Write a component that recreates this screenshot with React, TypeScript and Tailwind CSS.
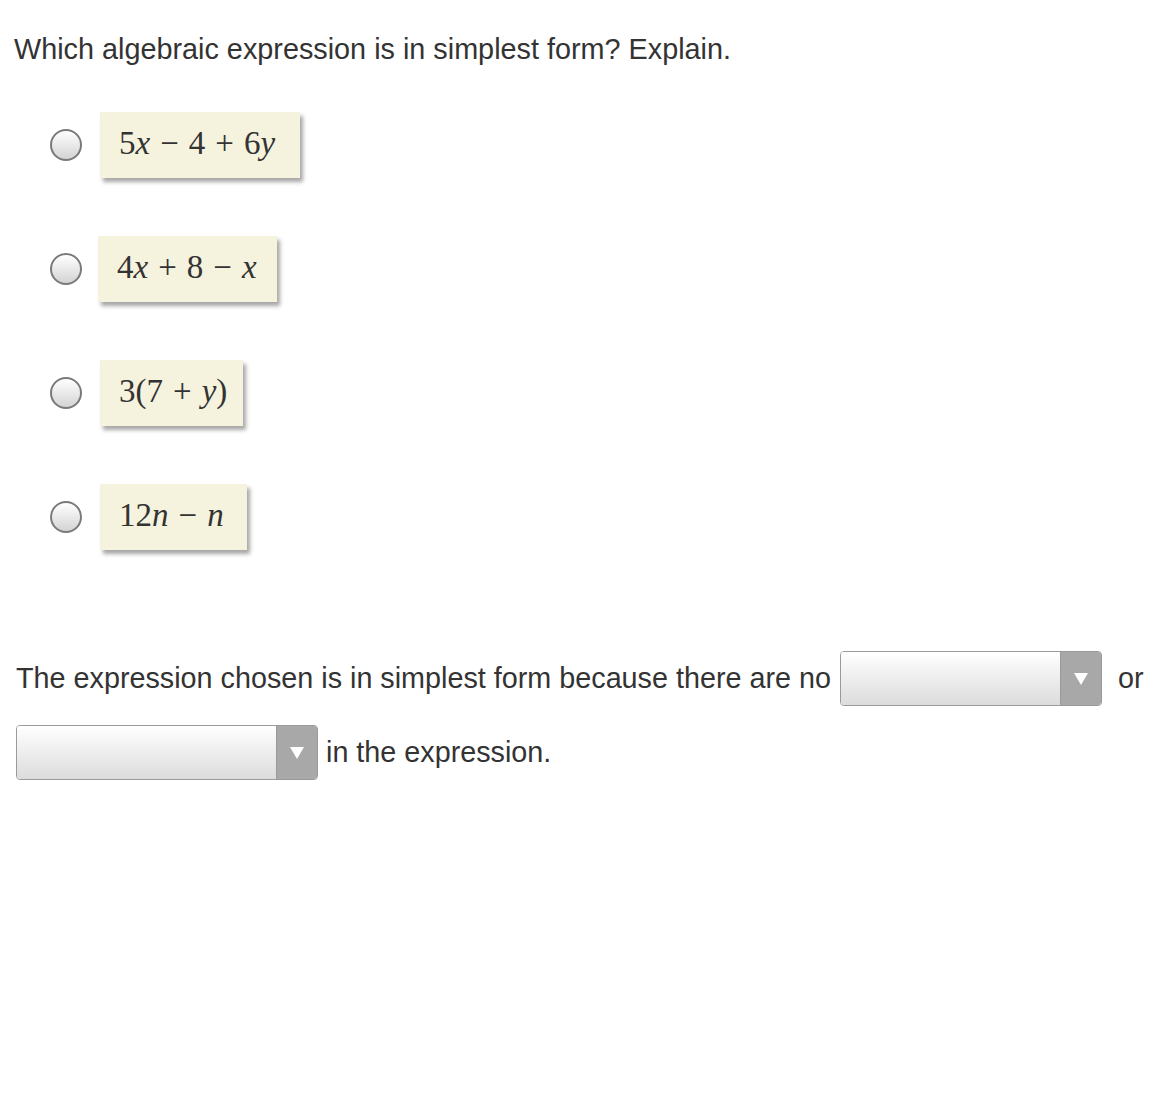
import React from "react";

function Radio() {
  return (
    <div className="w-[32px] h-[32px] rounded-full border-2 border-[#7a7a7a] bg-gradient-to-b from-white to-[#d4d4d4] shrink-0" />
  );
}

function MathBox({ children, w }: { children: React.ReactNode; w: string }) {
  return (
    <div
      className={`h-[66px] ${w} bg-[#f5f2dd] flex items-center pl-[19px] pb-[2px] shadow-[3px_4px_4px_rgba(0,0,0,0.35)] text-[33px] text-[#333] whitespace-nowrap`}
      style={{ fontFamily: '"Liberation Serif", "DejaVu Serif", serif' }}
    >
      {children}
    </div>
  );
}

function Dropdown({ w }: { w: string }) {
  return (
    <div className={`${w} h-[55px] rounded-[4px] border border-[#9a9a9a] flex overflow-hidden shrink-0`}>
      <div className="flex-1 bg-gradient-to-b from-white to-[#dcdcdc]" />
      <div className="w-[41px] bg-[#a8a8a8] flex items-center justify-center border-l border-[#9a9a9a]">
        <svg width="14" height="12" viewBox="0 0 14 12">
          <polygon points="0,0 14,0 7,12" fill="#ffffff" />
        </svg>
      </div>
    </div>
  );
}

const I = ({ children }: { children: React.ReactNode }) => <i>{children}</i>;
const Op = ({ children }: { children: React.ReactNode }) => (
  <span className="mx-[10px]">{children}</span>
);

export default function App() {
  return (
    <div
      className="w-[1172px] h-[1095px] bg-white text-[#333] relative"
      style={{ fontFamily: '"Liberation Sans", Arial, sans-serif' }}
    >
      <div className="pt-[30px] pl-[14px] text-[28.8px] leading-[38px]">
        Which algebraic expression is in simplest form? Explain.
      </div>

      <div className="flex flex-col gap-[58px] mt-[44px] pl-[50px]">
        <div className="flex items-center gap-[18px]">
          <Radio />
          <MathBox w="w-[200px]">
            5<I>x</I>
            <Op>−</Op>4<Op>+</Op>6<I>y</I>
          </MathBox>
        </div>
        <div className="flex items-center gap-[16px]">
          <Radio />
          <MathBox w="w-[179px]">
            4<I>x</I>
            <Op>+</Op>8<Op>−</Op>
            <I>x</I>
          </MathBox>
        </div>
        <div className="flex items-center gap-[18px]">
          <Radio />
          <MathBox w="w-[143px]">
            3(7<Op>+</Op>
            <I>y</I>)
          </MathBox>
        </div>
        <div className="flex items-center gap-[18px]">
          <Radio />
          <MathBox w="w-[147px]">
            12<I>n</I>
            <Op>−</Op>
            <I>n</I>
          </MathBox>
        </div>
      </div>

      <div className="mt-[101px] pl-[16px] text-[28.75px]">
        <div className="flex items-center">
          <span>The expression chosen is in simplest form because there are no</span>
          <div className="ml-[9px]">
            <Dropdown w="w-[262px]" />
          </div>
          <span className="ml-[16px]">or</span>
        </div>
        <div className="flex items-center mt-[19px]">
          <Dropdown w="w-[302px]" />
          <span className="ml-[8px]">in the expression.</span>
        </div>
      </div>
    </div>
  );
}
